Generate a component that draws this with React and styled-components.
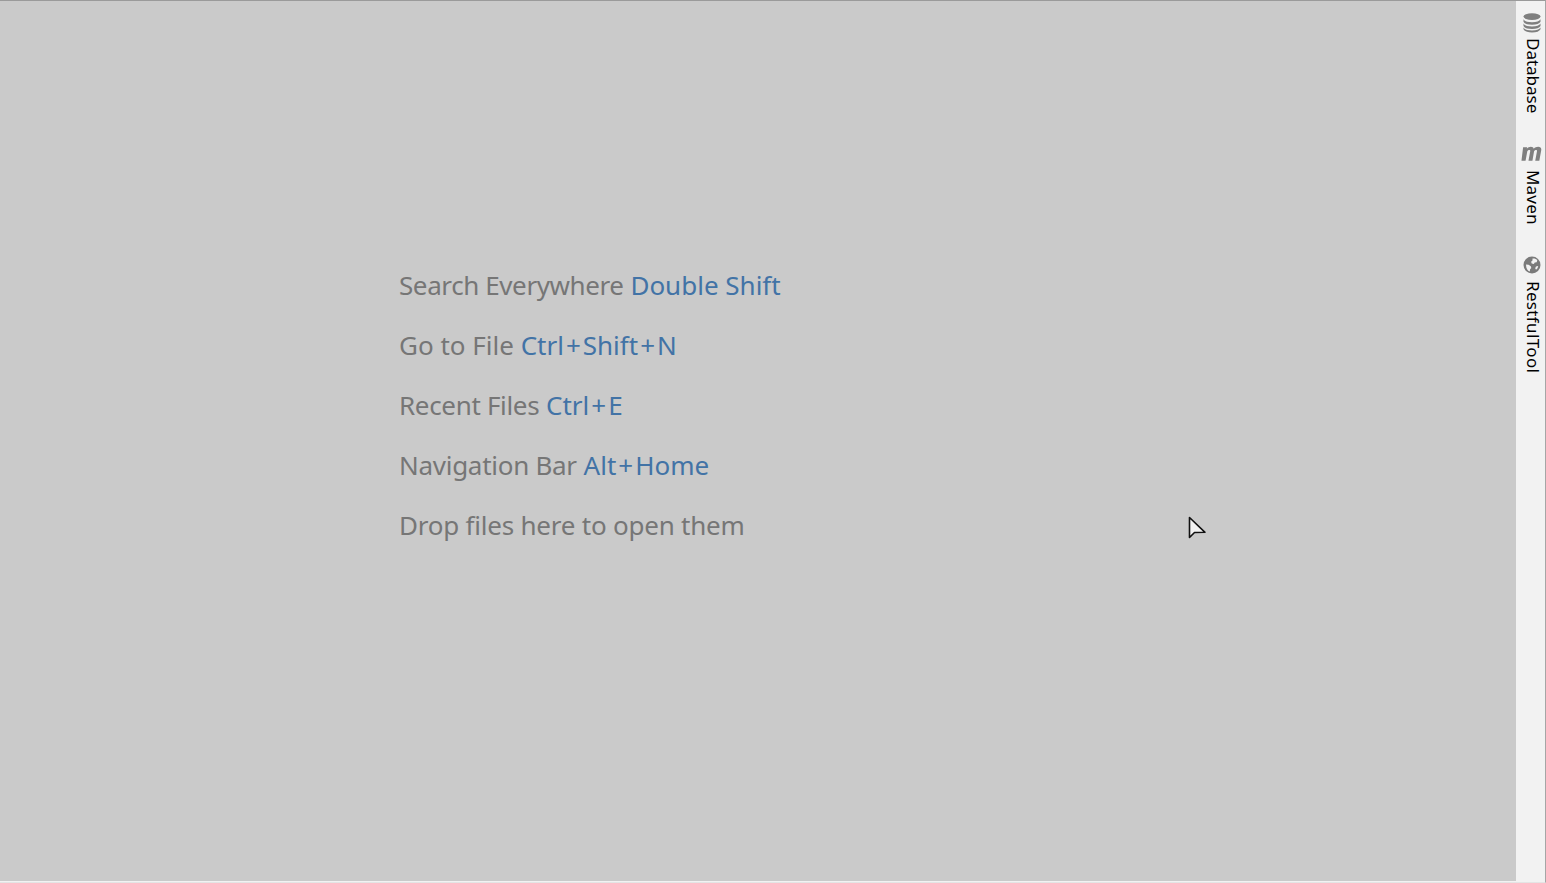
import React from "react";
import styled, { createGlobalStyle } from "styled-components";

const GlobalStyle = createGlobalStyle`
  html, body {
    margin: 0;
    padding: 0;
    height: 100%;
    overflow: hidden;
    background: #f2f2f2;
  }
`;

const hints = [
  { label: "Search Everywhere", keys: "Double Shift", tight: 0.4 },
  { label: "Go to File", keys: "Ctrl+Shift+N", tight: 0 },
  { label: "Recent Files", keys: "Ctrl+E", tight: 0.33 },
  { label: "Navigation Bar", keys: "Alt+Home", tight: 0.28 },
  { label: "Drop files here to open them", tight: 0.22 },
];

const DatabaseIcon = () => (
  <svg width="18" height="20" viewBox="0 0 18 20">
    <ellipse cx="9" cy="3.6" rx="8.5" ry="3.4" fill="#7f7f7f" />
    <path d="M.5 6.200c1 2 4 3 8.500 3s7.500-1 8.500-3v2.600c-1 2-4 3-8.500 3s-7.500-1-8.500-3z" fill="#7f7f7f" />
    <path d="M.5 10.400c1 2 4 3 8.500 3s7.500-1 8.500-3V13c-1 2-4 3-8.500 3s-7.500-1-8.500-3z" fill="#7f7f7f" />
    <path d="M.5 14.400c1 2 4 3 8.500 3s7.500-1 8.500-3v1.800c-1 2-4 3.300-8.500 3.300s-7.500-1.300-8.500-3.300z" fill="#7f7f7f" />
  </svg>
);

const MavenIcon = () => (
  <svg width="21" height="16" viewBox="1 0 18 14" preserveAspectRatio="none">
    <path
      d="M2.800 1h3.400l-.2 1.300C7 1.300 8.200.7 9.500.7c1.300 0 2.100.6 2.400 1.700C13 1.300 14.300.7 15.700.7c2 0 3 1.200 2.600 3.300L16.700 13h-3.500l1.500-8.300c.1-.8-.1-1.200-.8-1.200-.6 0-1.300.4-1.700 1L10.800 13H7.400l1.500-8.300c.1-.8-.1-1.200-.8-1.200-.6 0-1.300.4-1.700 1L4.900 13H1.400z"
      fill="#7f7f7f"
    />
  </svg>
);

const GlobeIcon = () => (
  <svg width="18" height="18" viewBox="0 0 18 18">
    <circle cx="9" cy="9" r="8.500" fill="#7a7a7a" />
    <path d="M9.500 2.500c1.800-.3 3.600.2 4.800 1.500l-.6 2.200-2 .4-.8 1.500-2.200-.6-.6-1.800 1.400-1.200z" fill="#f2f2f2" />
    <path d="M3 8.500l2.600.2 2.200 1.500.5 1.800-1.200 1.300-.3 2.200C4.600 15 3 12.500 3 8.500z" fill="#f2f2f2" />
    <path d="M13 10.500l2.200-.6c-.2 1.500-1 3-2.200 3.800l-.8-1.500z" fill="#f2f2f2" />
  </svg>
);

const tools = [
  { name: "Database", icon: <DatabaseIcon />, height: 133, gap: 5, spacing: 0 },
  { name: "Maven", icon: <MavenIcon />, height: 110, gap: 8, spacing: 0.2 },
  { name: "RestfulTool", icon: <GlobeIcon />, height: 140, gap: 7, spacing: 0.35 },
];

// the + in the reference's font is wider than in ours
const Keys = ({ value }) =>
  value.split("+").map((part, i) => (
    <React.Fragment key={part}>
      {i > 0 && <Plus>+</Plus>}
      {part}
    </React.Fragment>
  ));

const App = () => {
  return (
    <>
      <GlobalStyle />
      <Window>
        <Main>
          <HintList>
            {hints.map((hint) => (
              <Hint key={hint.label}>
                <HintLabel $tight={hint.tight}>{hint.label}</HintLabel>
                {hint.keys && (
                  <Shortcut>
                    {" "}
                    <Keys value={hint.keys} />
                  </Shortcut>
                )}
              </Hint>
            ))}
          </HintList>
          <Cursor width="19" height="25" viewBox="0 0 19 25">
            <path d="M1.500 1.500v20l5-5 10.500-.2z" fill="#f2f2f2" stroke="#111" strokeWidth="1.600" strokeLinejoin="round" />
          </Cursor>
        </Main>
        <ToolStrip>
          {tools.map((tool) => (
            <ToolButton key={tool.name} $height={tool.height}>
              <ToolIcon $gap={tool.gap}>{tool.icon}</ToolIcon>
              <ToolLabel $spacing={tool.spacing}>{tool.name}</ToolLabel>
            </ToolButton>
          ))}
        </ToolStrip>
      </Window>
    </>
  );
};

const Window = styled.div`
  display: flex;
  box-sizing: border-box;
  width: 1546px;
  height: 883px;
  padding-bottom: 1px;
  border-top: 1px solid #9a9a9a;
  border-right: 1px solid #a6a6a6;
  background: #f2f2f2;
  border-bottom: 1px solid #e4e4e4;
`;

const Main = styled.main`
  position: relative;
  flex: 1;
  box-sizing: border-box;
  padding: 254px 0 0 399px;
  background: #cacaca;
`;

const HintList = styled.div`
  display: flex;
  flex-direction: column;
`;

const Hint = styled.div`
  height: 60px;
  line-height: 60px;
  font-family: "Noto Sans", sans-serif;
  font-size: 26px;
  color: #767676;
  white-space: pre;
`;

const HintLabel = styled.span`
  letter-spacing: ${(props) => -props.$tight}px;
`;

const Shortcut = styled.span`
  color: #4273a6;
`;

const Plus = styled.span`
  padding: 0 2px;
`;

const Cursor = styled.svg`
  position: absolute;
  left: 1188px;
  top: 515px;
`;

const ToolStrip = styled.aside`
  display: flex;
  flex-direction: column;
  width: 29px;
  background: #f2f2f2;
`;

const ToolButton = styled.div`
  display: flex;
  flex-direction: column;
  align-items: center;
  height: ${(props) => props.$height}px;
  padding: 12px 0 0 2px;
  box-sizing: border-box;
`;

const ToolIcon = styled.div`
  display: flex;
  justify-content: center;
  margin-bottom: ${(props) => props.$gap}px;
`;

const ToolLabel = styled.span`
  writing-mode: vertical-rl;
  margin-left: 2px;
  font-family: "Noto Sans", sans-serif;
  font-size: 17px;
  line-height: 20px;
  letter-spacing: ${(props) => props.$spacing}px;
  color: #000;
`;

export default App;
